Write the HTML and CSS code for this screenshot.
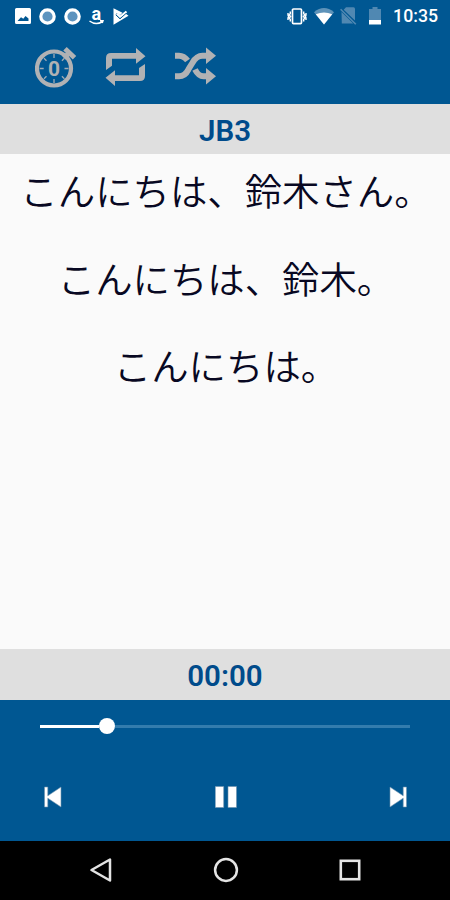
FILE: index.html
```html
<!DOCTYPE html>
<html lang="ja">
<head>
    <meta charset="UTF-8">
    <meta name="viewport" content="width=device-width, initial-scale=1.0">
    <title>JB3</title>
    <link rel="stylesheet" href="styles.css">
</head>
<body>
    <div class="screen">
        <header class="header">
            <div class="status-bar">
                <div class="notifications">
                    <svg width="16" height="16" viewBox="0 0 16 16">
                        <path fill="#fff" fill-rule="evenodd" d="M1.500 0h13Q16 0 16 1.500v13q0 1.500-1.500 1.500h-13Q0 16 0 14.500v-13Q0 0 1.500 0zM2.500 13h11v-2.500l-3-2.500-2.200 2.700L6 9.300z"/>
                    </svg>
                    <svg width="17" height="17" viewBox="0 0 17 17">
                        <circle cx="8.500" cy="8.500" r="6.700" fill="#5d94bf" stroke="#fff" stroke-width="3.200"/>
                    </svg>
                    <svg width="17" height="17" viewBox="0 0 17 17">
                        <circle cx="8.500" cy="8.500" r="6.700" fill="#5d94bf" stroke="#fff" stroke-width="3.200"/>
                    </svg>
                    <svg class="amazon" width="15" height="24" viewBox="0 0 15 24">
                        <text class="amazon-letter" x="7.300" y="16" text-anchor="middle">a</text>
                        <path fill="none" stroke="#fff" stroke-width="1.500" d="M.5 17q6 4.500 12.500 1M11 16.700h3l-.8 2.300"/>
                    </svg>
                    <svg width="16" height="17" viewBox="0 0 16 17">
                        <path fill="#fff" d="M.5.300 9.500 4.800 7 7.200 4 5 2.500 6.800 7 11 12.500 5.500 15.500 7.800.5 16.700z"/>
                        <path fill="none" stroke="#fff" stroke-width="2.200" d="M3.800 5.800 7 8.800 13.500 3.500"/>
                        <path fill="none" stroke="#005792" stroke-width=".9" d="M3 7 7 10.800 13 5.500"/>
                    </svg>
                </div>
                <div class="system">
                    <svg width="20" height="17" viewBox="0 0 20 17">
                        <rect x="5.500" y="1" width="9" height="14.600" rx="1" fill="none" stroke="#fff" stroke-width="1.700"/>
                        <path fill="none" stroke="#fff" stroke-width="1.400" d="M3.300 3.500v2L2.300 7l1.300 1.500L2.300 10l1 1.500v2M1 5v2l.6 1.500L1 10v2M16.700 3.500v2l1 1.500-1.300 1.500 1.300 1.500-1 1.500v2M19 5v2l-.6 1.500.6 1.500v2"/>
                    </svg>
                    <svg class="wifi" width="20" height="17" viewBox="0 0 20 17">
                        <path fill="#5e93b9" d="M0 4.200Q10-4 20 4.200L10 16.500z"/>
                        <path fill="#fff" d="M1.800 6.300Q10 2.500 18.200 6.300L10 16.500z"/>
                    </svg>
                    <svg class="sim" width="17" height="18" viewBox="0 0 17 18">
                        <path fill="#5088b2" d="M6 .3h7.500Q15 .3 15 2v11.600L3.700 2.700zM1.500 5 13.200 16.500H1.800z"/>
                        <path stroke="#5088b2" stroke-width="1.600" d="M.6 2.200 15.800 17.300"/>
                    </svg>
                    <svg class="battery" width="12" height="18" viewBox="0 0 12 18">
                        <path fill="#5088b2" d="M3.500 0h5v2H12v11H0V2h3.500z"/>
                        <path fill="#fff" d="M0 13h12v4.500H0z"/>
                    </svg>
                    <span class="clock">10:35</span>
                </div>
            </div>
            <div class="toolbar">
                <svg width="42" height="42" viewBox="0 0 42 42">
                    <circle cx="19" cy="22.500" r="17" fill="none" stroke="#b1b2b4" stroke-width="4.200"/>
                    <path fill="none" stroke="#a1abb5" stroke-width="1.300" d="M19 8v4M19 33v4M4.700 22.500h4M29.500 22.500h4M9 12.300l2.500 2.500M26.900 30.200l2.500 2.500M9 32.700l2.500-2.500M26.900 14.800l2.500-2.500"/>
                    <path fill="none" stroke="#b1b2b4" stroke-width="5" d="m29 12 5-5M30 2.800l9.500 9"/>
                    <text class="timer-number" x="19" y="29.800" text-anchor="middle">0</text>
                </svg>
                <svg width="42" height="42" viewBox="0 0 42 42">
                    <path fill="#b1b2b4" d="M1 24V12q0-5 5-5h25V2l9.500 8.200-9.500 7.600v-5H7v7zM40 18v12q0 5-5 5H10v5L.5 31.800 10 24.200v5h24V22z"/>
                </svg>
                <svg width="42" height="42" viewBox="0 0 42 42">
                    <path fill="none" stroke="#b1b2b4" stroke-width="6" d="M0 30.300h4q6 0 9.500-7l4-6.500q4-7 10-7h5M0 9.800h4q5 0 8.500 4.800M20 23.500q3.500 6.800 8.500 6.800h4"/>
                    <path fill="#b1b2b4" d="m31 1.500 10 8.300-10 8.200zM31 22l10 8.300-10 8.200z"/>
                </svg>
            </div>
        </header>

        <div class="title-bar">JB3</div>

        <main class="phrases">
            <p>こんにちは、鈴木さん。</p>
            <p>こんにちは、鈴木。</p>
            <p>こんにちは。</p>
        </main>

        <div class="time-bar">00:00</div>

        <section class="player">
            <div class="slider">
                <div class="elapsed"></div>
                <div class="thumb"></div>
                <div class="remaining"></div>
            </div>
            <div class="controls">
                <svg width="18" height="22" viewBox="0 0 18 22">
                    <path fill="#fff" stroke="#6b91ac" stroke-width=".6" d="M.5 1h3.300v8.800L17 1v20L3.800 12.200V21H.500z"/>
                </svg>
                <svg width="22" height="22" viewBox="0 0 22 22">
                    <path fill="#fff" stroke="#6b91ac" stroke-width=".6" d="M.3.500h8.400v21H.300zM13 .5h8.500v21H13z"/>
                </svg>
                <svg width="18" height="22" viewBox="0 0 18 22">
                    <path fill="#fff" stroke="#6b91ac" stroke-width=".6" d="M17.500 1h-3.300v8.800L1 1v20l13.200-8.800V21h3.300z"/>
                </svg>
            </div>
        </section>

        <nav class="nav-bar">
            <svg width="24" height="26" viewBox="0 0 24 26">
                <path fill="none" stroke="#e4e4e4" stroke-width="2.500" stroke-linejoin="round" d="M21 2.500v21L2.500 13z"/>
            </svg>
            <svg width="26" height="26" viewBox="0 0 26 26">
                <circle cx="13" cy="13" r="10.900" fill="none" stroke="#e4e4e4" stroke-width="2.500"/>
            </svg>
            <svg width="24" height="26" viewBox="0 0 24 26">
                <rect x="2.800" y="3.800" width="18.400" height="18.400" fill="none" stroke="#e4e4e4" stroke-width="2.600"/>
            </svg>
        </nav>
    </div>
</body>
</html>
```
FILE: styles.css
```css
* {
    box-sizing: border-box;
}

body {
    margin: 0;
    font-family: Roboto, "Noto Sans CJK JP", sans-serif;
    background: #000;
}

svg {
    display: block;
    flex: none;
}

.screen {
    display: flex;
    flex-direction: column;
    width: 450px;
    height: 900px;
    overflow: hidden;
}

.header {
    height: 104px;
    background: #005792;
}

.status-bar {
    display: flex;
    justify-content: space-between;
    align-items: center;
    height: 32px;
    padding: 0 12px 0 15px;
}

.notifications,
.system {
    display: flex;
    align-items: center;
}

.notifications {
    gap: 8px;
}

.amazon-letter {
    font-size: 18px;
    font-weight: 700;
    fill: #fff;
}

.notifications .amazon {
    margin-right: 1px;
}

.wifi {
    margin-left: 7px;
}

.sim {
    margin-left: 6px;
}

.battery {
    margin-left: 12px;
}

.clock {
    margin-left: 12px;
    font-size: 17.7px;
    font-weight: 500;
    line-height: 32px;
    color: #fff;
}

.toolbar {
    display: flex;
    gap: 28px;
    padding: 14px 35px;
}

.timer-number {
    font-size: 21px;
    font-weight: 700;
    fill: #b1b2b4;
}

.title-bar,
.time-bar {
    height: 50px;
    background: #dfdfdf;
    color: #004b8b;
    font-size: 29.5px;
    font-weight: 600;
    line-height: 55px;
    text-align: center;
}

.phrases {
    height: 495px;
    padding: 15px 0 0 2px;
    background: #fafafa;
}

.phrases p {
    margin: 0 0 44px;
    font-family: "Noto Sans CJK JP", sans-serif;
    font-size: 37.4px;
    font-weight: 350;
    line-height: 43.7px;
    color: #080822;
    text-align: center;
    white-space: nowrap;
}

.time-bar {
    height: 51px;
}

.player {
    height: 141px;
    padding: 18px 40px 0;
    background: #005792;
}

.slider {
    display: flex;
    align-items: center;
    height: 16px;
}

.elapsed {
    width: 59px;
    height: 3px;
    background: #fff;
}

.thumb {
    width: 16px;
    height: 16px;
    border-radius: 50%;
    background: #fff;
}

.remaining {
    flex: 1;
    height: 3px;
    background: #337cad;
}

.controls {
    display: flex;
    justify-content: space-between;
    padding: 52px 3px 0 4px;
}

.nav-bar {
    display: flex;
    justify-content: space-between;
    height: 59px;
    padding: 16px 88px 0 89px;
    background: #000;
}
```
